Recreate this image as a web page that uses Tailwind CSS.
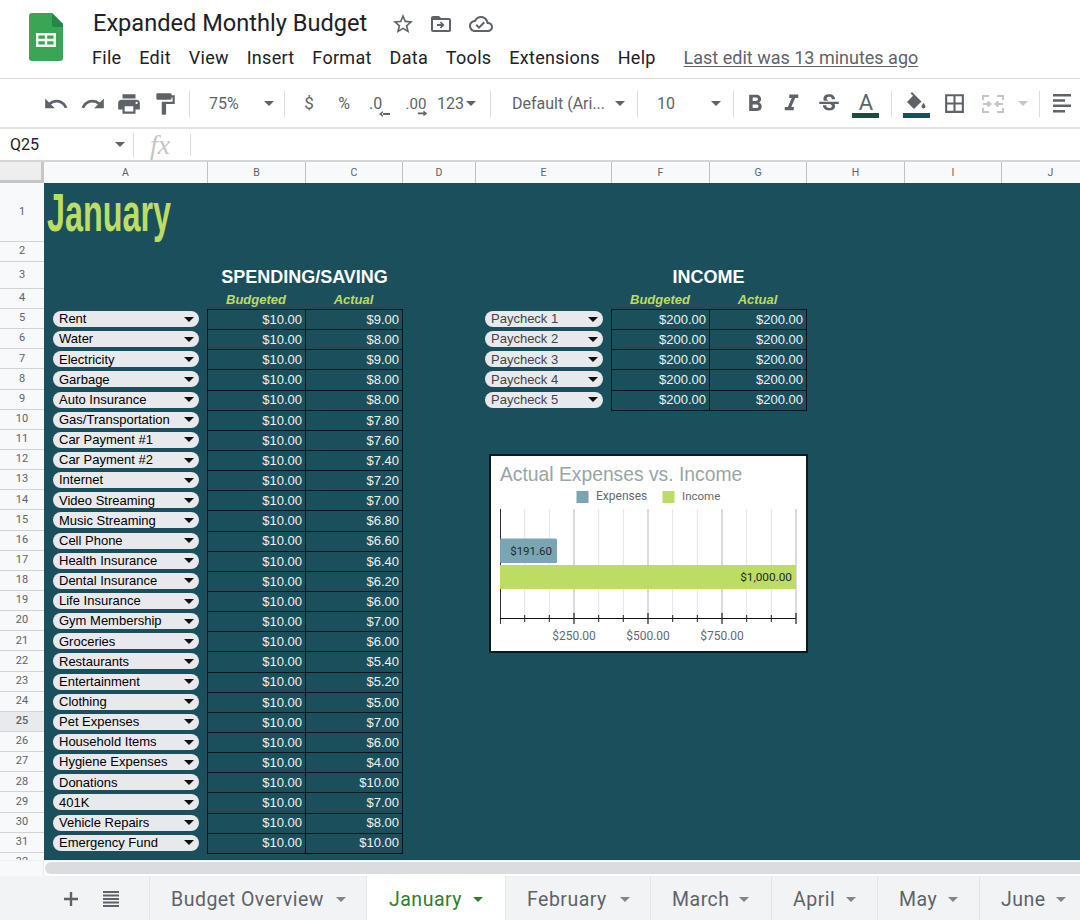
<!DOCTYPE html>
<html lang="en">
<head>
    <meta charset="UTF-8">
    <title>Expanded Monthly Budget</title>
    <script src="https://cdn.jsdelivr.net/npm/@tailwindcss/browser@4"></script>
</head>
<body class="bg-white w-[1080px] h-[920px] overflow-hidden font-['Roboto',sans-serif]">

    <!-- title + menu -->
    <header class="h-[79px] border-b border-[#dadce0] flex">
        <div class="w-[93px] pl-[29px] pt-[13px] shrink-0">
            <svg width="34" height="48" viewBox="0 0 34 48">
                <path d="M3 0h20l11 11v34a3 3 0 0 1-3 3H3a3 3 0 0 1-3-3V3a3 3 0 0 1 3-3z" fill="#3aa655"/>
                <path d="M23 0l11 11v3H25a2 2 0 0 1-2-2z" fill="#1f8a46"/>
                <path d="M7 20h20v14H7zm2.500 2.500v3.300h6.300v-3.300zm8.700 0v3.300h6.300v-3.300zm-8.700 5.700v3.300h6.300v-3.300zm8.700 0v3.300h6.300v-3.300z" fill="#f4f7f4" fill-rule="evenodd"/>
            </svg>
        </div>
        <div class="flex-1">
            <div class="flex items-center h-[36px] pt-[12px]">
                <span class="text-[23.600px] leading-none text-[#202124] w-[297px] shrink-0">Expanded Monthly Budget</span>
                <svg class="w-[24px] h-[24px] ml-[1px]" viewBox="0 0 24 24" fill="#5f6368"><path d="M22 9.240l-7.190-.62L12 2 9.190 8.630 2 9.240l5.460 4.730L5.820 21 12 17.270 18.180 21l-1.630-7.030L22 9.240zM12 15.400l-3.760 2.270 1-4.280-3.320-2.880 4.380-.38L12 6.100l1.710 4.040 4.380.38-3.320 2.880 1 4.280L12 15.400z"/></svg>
                <svg class="w-[24px] h-[24px] ml-[14px]" viewBox="0 0 24 24" fill="#5f6368"><path d="M20 6h-8l-2-2H4c-1.100 0-2 .9-2 2v12c0 1.100.9 2 2 2h16c1.100 0 2-.9 2-2V8c0-1.100-.9-2-2-2zm0 12H4V8h16v10z"/><path d="M12 9.500l-1.200 1.200 1.400 1.400H8v1.800h4.200l-1.400 1.400 1.200 1.200 3.500-3.500z"/></svg>
                <svg class="w-[24px] h-[24px] ml-[16px]" viewBox="0 0 24 24" fill="#5f6368"><path d="M19.350 10.040C18.670 6.590 15.640 4 12 4 9.110 4 6.600 5.640 5.350 8.040 2.340 8.360 0 10.910 0 14c0 3.310 2.690 6 6 6h13c2.760 0 5-2.240 5-5 0-2.640-2.050-4.780-4.650-4.960zM19 18H6c-2.210 0-4-1.790-4-4 0-2.050 1.530-3.760 3.560-3.970l1.070-.11.5-.95C8.080 7.140 9.940 6 12 6c2.620 0 4.880 1.860 5.390 4.430l.3 1.500 1.530.11c1.560.1 2.780 1.410 2.780 2.960 0 1.650-1.350 3-3 3zm-9-3.820l-2.090-2.090L6.500 13.500 10 17l6.010-6.010-1.410-1.410z"/></svg>
            </div>
            <nav class="flex items-center h-[30px] mt-[6px] -ml-[1px] text-[18px] tracking-[0.3px] text-[#202124] gap-[17.800px]">
                <span>File</span><span>Edit</span><span>View</span><span>Insert</span><span>Format</span><span>Data</span><span>Tools</span><span>Extensions</span><span>Help</span>
                <span class="ml-[10px] tracking-normal text-[#5f6368] underline underline-offset-2">Last edit was 13 minutes ago</span>
            </nav>
        </div>
    </header>

    <!-- toolbar -->
    <div class="h-[50px] pt-[1px] border-b-2 border-[#e3e3e3] flex items-center pl-[38px] text-[#5f6368] text-[16px]">
        <span class="w-[36px] flex justify-center"><svg class="w-[26px] h-[26px]" viewBox="0 0 24 24" fill="#5f6368"><path d="M12.500 8c-2.650 0-5.050.99-6.900 2.600L2 7v9h9l-3.620-3.620c1.390-1.160 3.160-1.880 5.120-1.880 3.540 0 6.550 2.310 7.600 5.500l2.370-.78C21.080 11.030 17.150 8 12.500 8z"/></svg></span>
        <span class="w-[37px] flex justify-center"><svg class="w-[26px] h-[26px]" viewBox="0 0 24 24" fill="#5f6368"><path d="M18.400 10.600C16.550 8.990 14.150 8 11.500 8c-4.650 0-8.580 3.030-9.960 7.220L3.900 16c1.050-3.190 4.050-5.500 7.600-5.500 1.950 0 3.730.72 5.120 1.880L13 16h9V7l-3.600 3.600z"/></svg></span>
        <span class="w-[36px] flex justify-center"><svg class="w-[26px] h-[26px]" viewBox="0 0 24 24" fill="#5f6368"><path d="M19 8H5c-1.660 0-3 1.340-3 3v6h4v4h12v-4h4v-6c0-1.660-1.340-3-3-3zm-3 11H8v-5h8v5zm3-7c-.55 0-1-.45-1-1s.45-1 1-1 1 .45 1 1-.45 1-1 1zm-1-9H6v4h12V3z"/></svg></span>
        <span class="w-[36px] flex justify-center"><svg class="w-[26px] h-[26px]" viewBox="0 0 24 24" fill="#5f6368"><path d="M18 4V3c0-.55-.45-1-1-1H5c-.55 0-1 .45-1 1v4c0 .55.45 1 1 1h12c.55 0 1-.45 1-1V6h1v4H9v11c0 .55.45 1 1 1h2c.55 0 1-.45 1-1v-9h8V4h-3z"/></svg></span>
        <span class="w-px h-[26px] bg-[#dadce0] ml-[6px]"></span>
        <span class="w-[55px] ml-[19px]">75%</span>
        <span class="w-0 h-0 border-x-[5px] border-x-transparent border-t-[5px] border-t-[#5f6368]"></span>
        <span class="w-px h-[26px] bg-[#dadce0] ml-[10px]"></span>
        <span class="w-[48px] text-center text-[17px]">$</span>
        <span class="w-[22px] text-center">%</span>
        <span class="w-[44px] flex justify-center"><svg width="32" height="30" viewBox="0 0 32 30"><text x="8" y="20" font-size="16" fill="#5f6368" font-family="Roboto">.0</text><path d="M21 24h8v2h-8zM22 22l-4 3 4 3z" fill="#5f6368"/></svg></span>
        <span class="w-[32px] flex justify-center"><svg width="34" height="30" viewBox="0 0 34 30"><text x="7" y="20" font-size="16" fill="#5f6368" font-family="Roboto">.00</text><path d="M20 24h6v2h-6zM26 22l4 3-4 3z" fill="#5f6368"/></svg></span>
        <span class="ml-[6px]">123</span>
        <span class="w-0 h-0 ml-[2px] border-x-[5px] border-x-transparent border-t-[5px] border-t-[#5f6368]"></span>
        <span class="w-px h-[26px] bg-[#dadce0] ml-[14px]"></span>
        <span class="w-[108px] pl-[21px] shrink-0 whitespace-nowrap">Default (Ari...</span>
        <span class="ml-[16px] w-0 h-0 border-x-[5px] border-x-transparent border-t-[5px] border-t-[#5f6368]"></span>
        <span class="w-px h-[26px] bg-[#dadce0] ml-[12px]"></span>
        <span class="w-[73px] pl-[19px]">10</span>
        <span class="w-0 h-0 border-x-[5px] border-x-transparent border-t-[5px] border-t-[#5f6368]"></span>
        <span class="w-px h-[26px] bg-[#dadce0] ml-[12px]"></span>
        <span class="w-[41px] ml-[1px] flex justify-center"><svg class="w-[28px] h-[28px]" viewBox="0 0 24 24" fill="#5f6368"><path d="M15.600 10.790c.97-.67 1.650-1.770 1.650-2.790 0-2.260-1.750-4-4-4H7v14h7.040c2.090 0 3.710-1.700 3.710-3.790 0-1.520-.86-2.820-2.150-3.420zM10 6.500h3c.83 0 1.500.67 1.500 1.500s-.67 1.500-1.500 1.500h-3v-3zm3.500 9H10v-3h3.500c.83 0 1.500.67 1.500 1.500s-.67 1.500-1.500 1.500z"/></svg></span>
        <span class="w-[32px] flex justify-center shrink-0"><svg class="w-[27px] h-[27px]" viewBox="0 0 24 24" fill="#5f6368"><path d="M10 4v3h2.210l-3.420 8H6v3h8v-3h-2.210l3.420-8H18V4z"/></svg></span>
        <span class="w-[42px] flex justify-center"><svg class="w-[26px] h-[26px]" viewBox="0 0 24 24" fill="#5f6368"><path d="M6.850 7.080C6.850 4.370 9.450 3 12.240 3c1.640 0 3 .49 3.900 1.280.77.65 1.460 1.730 1.460 3.240h-3.010c0-.31-.05-.59-.15-.85-.29-.86-1.200-1.280-2.250-1.280-1.860 0-2.340.96-2.340 1.680 0 .48.25.88.74 1.210.38.25.77.48 1.410.7H7.390c-.21-.34-.54-.89-.54-1.900zM21 12v-2H3v2h9.620c1.150.45 1.960.75 1.960 1.970 0 1-.81 1.670-2.280 1.670-1.540 0-2.930-.54-2.930-2.510H6.400c0 .55.08 1.130.24 1.580.81 2.290 3.290 3.300 5.670 3.300 2.270 0 5.300-.89 5.300-4.050 0-.3-.01-1.160-.48-1.940H21V12z"/></svg></span>
        <span class="w-[32px] flex flex-col items-center"><span class="text-[22px] leading-[21px] text-[#5f6368]">A</span><span class="w-[27px] h-[5px] bg-[#1f4a40] mb-[-2px]"></span></span>
        <span class="w-px h-[26px] bg-[#dadce0] ml-[9px]"></span>
        <span class="w-[49px] flex flex-col items-center"><svg class="w-[24px] h-[21px]" viewBox="0 0 24 21" fill="#5f6368"><path d="M8 0L6.600 1.400 9 3.800 3 10l7 7 7.500-7.500zM19.500 11s-2 2.200-2 3.500a2 2 0 0 0 4 0c0-1.300-2-3.500-2-3.500z"/></svg><span class="w-[27px] h-[5px] bg-[#1c4f5c] mb-[-2px]"></span></span>
        <span class="w-[27px] flex justify-center"><svg class="w-[25px] h-[25px]" viewBox="0 0 24 24" fill="#5f6368"><path d="M3 3v18h18V3H3zm8 16H5v-6h6v6zm0-8H5V5h6v6zm8 8h-6v-6h6v6zm0-8h-6V5h6v6z"/></svg></span>
        <span class="w-[49px] ml-[1px] flex justify-center"><svg class="w-[24px] h-[24px]" viewBox="0 0 24 24" fill="none" stroke="#c4c7c5" stroke-width="2"><path d="M2 8V4h6M16 4h6v4M2 16v4h6M16 20h6v-4M2 12h7M22 12h-7M6.500 9.500L9.500 12l-3 2.500M17.500 9.500l-3 2.500 3 2.500"/></svg></span>
        <span class="w-0 h-0 border-x-[5px] border-x-transparent border-t-[5px] border-t-[#c4c7c5]"></span>
        <span class="w-px h-[26px] bg-[#dadce0] ml-[11px]"></span>
        <span class="ml-[13px] shrink-0"><svg class="w-[19px] h-[19px]" viewBox="0 0 19 19" fill="#5f6368"><path d="M0 0h18v2.500H0zM0 5.300h12v2.500H0zM0 10.600h18v2.500H0zM0 15.900h12v2.500H0z"/></svg></span>
    </div>

    <!-- formula bar -->
    <div class="h-[31px] flex items-center text-[16px] text-[#202124]">
        <span class="w-[115px] pl-[10px]">Q25</span>
        <span class="w-0 h-0 border-x-[5px] border-x-transparent border-t-[5px] border-t-[#5f6368]"></span>
        <span class="w-px h-[24px] bg-[#dadce0] ml-[8px]"></span>
        <span class="w-[56px] pl-[16px] font-['Liberation_Serif',serif] italic text-[28px] leading-none text-[#c4c7c5]">fx</span>
        <span class="w-px h-[22px] bg-[#dadce0]"></span>
    </div>

    <!-- column letters -->
    <div class="h-[23px] flex border-t-2 border-[#d5d5d5] bg-[#f8f9fa] text-[10.500px] text-[#5f6368] leading-[21px] text-center">
        <div class="w-[44px] shrink-0 border-r-[3px] border-b-[3px] border-[#c6c6c6] bg-[#eeeeee]"></div>
        <div class="w-[164px] shrink-0 border-r border-[#c0c0c0]">A</div>
        <div class="w-[98px] shrink-0 border-r border-[#c0c0c0]">B</div>
        <div class="w-[97px] shrink-0 border-r border-[#c0c0c0]">C</div>
        <div class="w-[73px] shrink-0 border-r border-[#c0c0c0]">D</div>
        <div class="w-[136px] shrink-0 border-r border-[#c0c0c0]">E</div>
        <div class="w-[98px] shrink-0 border-r border-[#c0c0c0]">F</div>
        <div class="w-[97px] shrink-0 border-r border-[#c0c0c0]">G</div>
        <div class="w-[98px] shrink-0 border-r border-[#c0c0c0]">H</div>
        <div class="w-[97px] shrink-0 border-r border-[#c0c0c0]">I</div>
        <div class="w-[97px] shrink-0">J</div>
    </div>

    <!-- sheet -->
    <div class="flex h-[677px] overflow-hidden">
        <div id="rowHeaders" class="w-[44px] shrink-0 bg-[#f8f9fa] text-[11px] text-[#5f6368] text-center"></div>
        <div class="relative flex-1 bg-[#1c4f5c] font-['Liberation_Sans',sans-serif] text-[13px]">
            <div class="h-[59px] pl-[3px] flex items-center">
                <span class="inline-block origin-left scale-x-[0.61] font-bold text-[53px] leading-none text-[#bcdc64] whitespace-nowrap">January</span>
            </div>
            <div class="h-[20px]"></div>
            <div class="flex">
                <div class="w-[358px] shrink-0">
                    <div class="h-[27px] pt-[3px] pl-[163px] flex items-center justify-center font-bold text-[18px] text-white"><span>SPENDING/SAVING</span></div>
                    <div class="h-[20px] grid grid-cols-[163px_98px_97px] text-center font-bold italic text-[#bcdc64] leading-[21px]"><span></span><span>Budgeted</span><span>Actual</span></div>
                    <div id="spending"></div>
                </div>
                <div class="w-[73px] shrink-0"></div>
                <div class="w-[331px] shrink-0">
                    <div class="h-[27px] pt-[3px] pl-[136px] flex items-center justify-center font-bold text-[18px] text-white"><span>INCOME</span></div>
                    <div class="h-[20px] grid grid-cols-[136px_98px_97px] text-center font-bold italic text-[#bcdc64] leading-[21px]"><span></span><span>Budgeted</span><span>Actual</span></div>
                    <div id="income"></div>
                </div>
            </div>

            <!-- floating chart -->
            <div class="absolute left-[445px] top-[271px] w-[319px] h-[199px] bg-white border-2 border-[#0c1a1f]">
                <svg width="315" height="195" viewBox="491 456 315 195" font-family="Roboto">
                    <text x="500" y="481" font-size="19.300" fill="#98a5a6" font-family="Liberation Sans">Actual Expenses vs. Income</text>
                    <rect x="576.500" y="491" width="12" height="12" fill="#7ba5b2"/>
                    <text x="596" y="500" font-size="12" fill="#5f6b6e">Expenses</text>
                    <rect x="662.500" y="491" width="12" height="12" fill="#bcdc64"/>
                    <text x="682" y="500" font-size="11.500" fill="#5f6b6e">Income</text>
                    <g stroke="#e3e3e3" stroke-width="1">
                        <path d="M524.700 509V618M549.300 509V618M598.700 509V618M623.300 509V618M672.700 509V618M697.300 509V618M746.700 509V618M771.300 509V618"/>
                    </g>
                    <path d="M574 509V618M648 509V618M722 509V618M796 509V618" stroke="#cfcfcf" stroke-width="1.500"/>
                    <path d="M500.500 509V624" stroke="#333" stroke-width="1"/>
                    <rect x="500" y="538.500" width="57" height="24.500" rx="1.500" fill="#7ba5b2"/>
                    <rect x="500" y="565" width="296" height="24" fill="#bcdc64"/>
                    <text x="552" y="554.500" font-size="11.500" fill="#1d2b2e" text-anchor="end">$191.60</text>
                    <text x="792" y="580.500" font-size="11.800" fill="#1d2b2e" text-anchor="end">$1,000.00</text>
                    <path d="M500 618.500H796" stroke="#111" stroke-width="1.200"/>
                    <path d="M524.700 615V622M549.300 615V622M598.700 615V622M623.300 615V622M672.700 615V622M697.300 615V622M746.700 615V622M771.300 615V622" stroke="#222" stroke-width="1"/>
                    <path d="M574 613V624M648 613V624M722 613V624M796 613V624" stroke="#333" stroke-width="1.300"/>
                    <g font-size="12" fill="#5f6b6e" text-anchor="middle">
                        <text x="574" y="640">$250.00</text>
                        <text x="648" y="640">$500.00</text>
                        <text x="722" y="640">$750.00</text>
                    </g>
                </svg>
            </div>
        </div>
    </div>

    <!-- scrollbar -->
    <div class="h-[16px] flex border-t border-[#eef0f1]">
        <div class="w-[44px] border-r border-[#e8eaed] bg-[#f8f9fa]"></div>
        <div class="flex-1 ml-[1px] mt-[1px] mb-[2px] rounded-l-[6px] bg-[#dadce0]"></div>
    </div>

    <!-- sheet tabs -->
    <div class="h-[45px] flex bg-[#f1f3f4] text-[19.500px] tracking-[0.5px] text-[#5f6368] overflow-hidden">
        <div class="w-[150px] shrink-0 relative border-r border-[#e3e5e8]">
            <svg class="absolute left-[62px] top-[14px] w-[18px] h-[18px]" viewBox="0 0 18 18" fill="#5f6368"><path d="M7.800 2h2.400v5.800H16v2.400h-5.800V16H7.800v-5.800H2V7.800h5.800z"/></svg>
            <svg class="absolute left-[103px] top-[15px] w-[16px] h-[16px]" viewBox="0 0 16 16" fill="#5f6368"><path d="M0 0h16v2H0zM0 3.500h16v2H0zM0 7h16v2H0zM0 10.500h16v2H0zM0 14h16v2H0z"/></svg>
        </div>
        <div class="w-[217px] shrink-0 pl-[21px] pt-[2px] flex items-center border-r border-[#e3e5e8]"><span class="w-[153px] whitespace-nowrap">Budget Overview</span><span class="ml-[12px] w-0 h-0 border-x-[5px] border-x-transparent border-t-[5px] border-t-[#80868b]"></span></div>
        <div class="w-[138px] shrink-0 pl-[22px] pt-[2px] flex items-center bg-white text-[#2e7d32]"><span class="w-[72px]">January</span><span class="ml-[12px] w-0 h-0 border-x-[5px] border-x-transparent border-t-[5px] border-t-[#2e7d32]"></span></div>
        <div class="w-[146px] shrink-0 pl-[21px] pt-[2px] flex items-center border-x border-[#e3e5e8]"><span class="w-[81px]">February</span><span class="ml-[12px] w-0 h-0 border-x-[5px] border-x-transparent border-t-[5px] border-t-[#80868b]"></span></div>
        <div class="w-[121px] shrink-0 pl-[21px] pt-[2px] flex items-center border-r border-[#e3e5e8]"><span class="w-[55px]">March</span><span class="ml-[12px] w-0 h-0 border-x-[5px] border-x-transparent border-t-[5px] border-t-[#80868b]"></span></div>
        <div class="w-[106px] shrink-0 pl-[21px] pt-[2px] flex items-center border-r border-[#e3e5e8]"><span class="w-[41px]">April</span><span class="ml-[12px] w-0 h-0 border-x-[5px] border-x-transparent border-t-[5px] border-t-[#80868b]"></span></div>
        <div class="w-[102px] shrink-0 pl-[21px] pt-[2px] flex items-center border-r border-[#e3e5e8]"><span class="w-[37px]">May</span><span class="ml-[12px] w-0 h-0 border-x-[5px] border-x-transparent border-t-[5px] border-t-[#80868b]"></span></div>
        <div class="w-[101px] shrink-0 pl-[21px] pt-[2px] flex items-center"><span class="w-[43px]">June</span><span class="ml-[12px] w-0 h-0 border-x-[5px] border-x-transparent border-t-[5px] border-t-[#80868b]"></span></div>
    </div>

    <script>
        const spending = [
            ['Rent', '$9.00'], ['Water', '$8.00'], ['Electricity', '$9.00'], ['Garbage', '$8.00'],
            ['Auto Insurance', '$8.00'], ['Gas/Transportation', '$7.80'], ['Car Payment #1', '$7.60'],
            ['Car Payment #2', '$7.40'], ['Internet', '$7.20'], ['Video Streaming', '$7.00'],
            ['Music Streaming', '$6.80'], ['Cell Phone', '$6.60'], ['Health Insurance', '$6.40'],
            ['Dental Insurance', '$6.20'], ['Life Insurance', '$6.00'], ['Gym Membership', '$7.00'],
            ['Groceries', '$6.00'], ['Restaurants', '$5.40'], ['Entertainment', '$5.20'],
            ['Clothing', '$5.00'], ['Pet Expenses', '$7.00'], ['Household Items', '$6.00'],
            ['Hygiene Expenses', '$4.00'], ['Donations', '$10.00'], ['401K', '$7.00'],
            ['Vehicle Repairs', '$8.00'], ['Emergency Fund', '$10.00']
        ];
        const income = ['Paycheck 1', 'Paycheck 2', 'Paycheck 3', 'Paycheck 4', 'Paycheck 5'];

        function cell(text) {
            return `<div class="border border-[#08161b] -mr-px self-start flex items-center justify-end pr-[3px] text-[#eef2f3] h-[21.150px]">${text}</div>`;
        }
        function pill(text, textClass) {
            return `<div class="h-[16px] rounded-full bg-[#e8e9ed] flex items-center justify-between pl-[6px] pr-[5px] ${textClass}"><span>${text}</span><span class="w-0 h-0 border-x-[5px] border-x-transparent border-t-[5px] border-t-[#111]"></span></div>`;
        }

        document.getElementById('spending').innerHTML = spending.map(([name, actual]) =>
            `<div class="grid grid-rows-[20.150px] grid-cols-[163px_98px_97px] items-center">
                <div class="ml-[9px] mr-[8px]">${pill(name, 'text-black')}</div>${cell('$10.00')}${cell(actual)}
            </div>`).join('');

        document.getElementById('income').innerHTML = income.map(name =>
            `<div class="grid grid-rows-[20.150px] grid-cols-[136px_98px_97px] items-center">
                <div class="ml-[10px] mr-[8px]">${pill(name, 'text-[#444]')}</div>${cell('$200.00')}${cell('$200.00')}
            </div>`).join('');

        const heights = { 1: 'h-[59px]', 2: 'h-[20px]', 3: 'h-[27px]', 4: 'h-[20px]' };
        let headers = '';
        for (let i = 1; i <= 32; i++) {
            const h = heights[i] || 'h-[20.150px]';
            const active = i === 25 ? 'bg-[#e8eaed] font-medium' : '';
            headers += `<div class="${h} ${active} border-b border-[#d0d2d4] flex items-center justify-center">${i}</div>`;
        }
        document.getElementById('rowHeaders').innerHTML = headers;
    </script>
</body>
</html>
